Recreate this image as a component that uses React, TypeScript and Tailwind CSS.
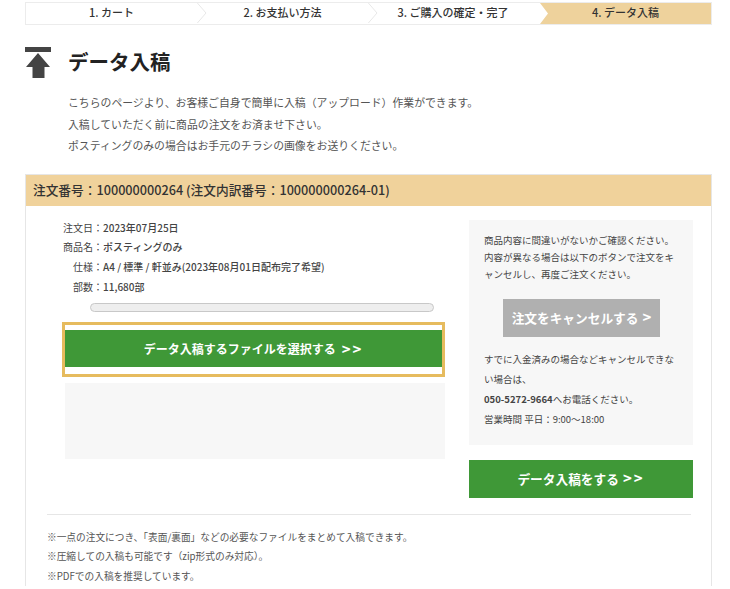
const font = { fontFamily: '"Noto Sans CJK JP", "Liberation Sans", sans-serif' }

const steps = [
  { label: "1. カート", box: "w-[181px] pr-[10px]", chevron: true },
  { label: "2. お支払い方法", box: "w-[171px] pr-[20px]", chevron: true },
  { label: "3. ご購入の確定・完了", box: "w-[170px] pr-[20px]", chevron: false },
]

function StepChevron() {
  return (
    <svg width="11" height="20" viewBox="0 0 11 20" className="absolute right-0 top-0">
      <path d="M0.5 -1 L10 10 L0.5 21" fill="none" stroke="#e8e8e8" strokeWidth="1" />
    </svg>
  )
}

function Steps() {
  return (
    <div className="ml-[25px] mt-[2px] flex h-[23px] w-[687px] border-x border-y-[1.5px] border-[#ececec] bg-white">
      {steps.map((step) => (
        <div
          key={step.label}
          className={`relative flex h-full items-center justify-center pb-[2px] text-[11px] font-medium text-[#333] ${step.box}`}
        >
          {step.label}
          {step.chevron && <StepChevron />}
        </div>
      ))}
      <div className="-ml-[8px] flex h-full flex-1 items-center justify-center bg-[#eed29c] pb-[2px] text-[11px] font-medium text-[#333] [clip-path:polygon(0_0,100%_0,100%_100%,0_100%,8px_50%)]">
        4. データ入稿
      </div>
    </div>
  )
}

function UploadIcon() {
  return (
    <svg width="26" height="31" viewBox="0 0 26 31" className="shrink-0">
      <rect x="0" y="0" width="26" height="5" fill="#444" />
      <path d="M13 6 L25 20 L19.5 20 L19.5 31 L7.5 31 L7.5 20 L1 20 Z" fill="#444" />
    </svg>
  )
}

export default function App() {
  return (
    <div className="h-[589px] w-[730px] overflow-hidden bg-white" style={font}>
      <Steps />

      <div className="ml-[25px] mt-[22px] flex items-start gap-[17px]">
        <UploadIcon />
        <h1 className="text-[20.5px] font-bold leading-[28px] text-[#222]">データ入稿</h1>
      </div>

      <div className="ml-[68px] mt-[14px] text-[10.85px] leading-[21.5px] text-[#555]">
        <p>こちらのページより、お客様ご自身で簡単に入稿（アップロード）作業ができます。</p>
        <p>入稿していただく前に商品の注文をお済ませ下さい。</p>
        <p>ポスティングのみの場合はお手元のチラシの画像をお送りください。</p>
      </div>

      <section className="ml-[25px] mt-[17px] w-[687px] border-x border-t border-[#e6e6e6]">
        <div className="flex h-[31px] items-center bg-[#f0d29b] pl-[7px] text-[12.7px] font-medium text-[#333]">
          注文番号：100000000264 (注文内訳番号：100000000264-01)
        </div>

        <div className="flex pl-[36px] pt-[14px]">
          <div className="w-[383px]">
            <dl className="-mt-[2px] ml-[1px] text-[10px] leading-[19.7px] text-[#444]">
              <div className="flex">
                <dt>注文日：</dt>
                <dd className="font-medium">2023年07月25日</dd>
              </div>
              <div className="flex">
                <dt>商品名：</dt>
                <dd className="font-medium">ポスティングのみ</dd>
              </div>
              <div className="flex pl-[10px]">
                <dt>仕様：</dt>
                <dd className="font-medium">A4 / 標準 / 軒並み(2023年08月01日配布完了希望)</dd>
              </div>
              <div className="flex pl-[10px]">
                <dt>部数：</dt>
                <dd className="font-medium">11,680部</dd>
              </div>
            </dl>

            <div className="ml-[28px] mt-[7px] h-[9px] w-[344px] rounded-full border border-[#c8c8c8] bg-[#eeeeee]" />

            <div className="mt-[10px] h-[55px] border-[3px] border-[#e6bb5e] bg-white pt-[5px]">
              <button className="flex h-[37px] w-full items-center justify-center bg-[#3f9837] text-[12px] font-bold text-white">
                データ入稿するファイルを選択する
                <span className="ml-[6px] text-[15px] tracking-[2px]">&gt;&gt;</span>
              </button>
            </div>

            <div className="ml-[3px] mt-[6px] h-[76px] bg-[#f7f7f7]" />
          </div>

          <div className="ml-[24px] w-[224px]">
            <div className="h-[225px] bg-[#f7f7f7] px-[15px] pt-[12px] text-[9.5px] text-[#444]">
              <p className="leading-[17px]">
                商品内容に間違いがないかご確認ください。内容が異なる場合は以下のボタンで注文をキャンセルし、再度ご注文ください。
              </p>
              <button className="ml-[19px] mt-[16px] flex h-[38px] w-[157px] items-center justify-center bg-[#b0b0b0] text-[12.7px] font-bold text-white">
                注文をキャンセルする
                <span className="ml-[4px] text-[15px]">&gt;</span>
              </button>
              <div className="mt-[12px] leading-[20px]">
                <p>すでに入金済みの場合などキャンセルできない場合は、</p>
                <p>
                  <span className="font-bold">050-5272-9664</span>へお電話ください。
                </p>
                <p>営業時間 平日：9:00～18:00</p>
              </div>
            </div>
            <button className="mt-[15px] flex h-[38px] w-full items-center justify-center bg-[#3f9837] text-[12.7px] font-bold text-white">
              データ入稿をする
              <span className="ml-[4px] text-[15px] tracking-[2px]">&gt;&gt;</span>
            </button>
          </div>
        </div>

        <div className="ml-[21px] mt-[16px] w-[644px] border-t border-[#e6e6e6] pt-[13px] text-[9.7px] leading-[19.5px] text-[#555]">
          <p>※一点の注文につき、「表面/裏面」などの必要なファイルをまとめて入稿できます。</p>
          <p>※圧縮しての入稿も可能です（zip形式のみ対応）。</p>
          <p>※PDFでの入稿を推奨しています。</p>
        </div>
      </section>
    </div>
  )
}
